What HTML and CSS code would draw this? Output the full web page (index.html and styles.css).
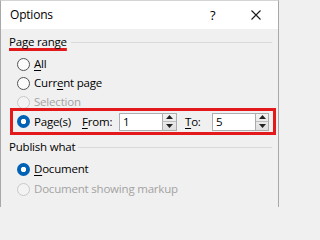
FILE: index.html
```html
<!DOCTYPE html>
<html>
<head>
<meta charset="utf-8">
<link rel="stylesheet" href="styles.css">
</head>
<body>
<div class="window">
  <div class="titlebar">
    <span class="title">Options</span>
    <span class="help">?</span>
    <span class="close"><svg width="10" height="10" viewBox="0 0 10 10"><path d="M0.5 0.5 L9.5 9.5 M9.5 0.5 L0.5 9.5" stroke="#1a1a1a" stroke-width="1.1" fill="none"/></svg></span>
  </div>
  <div class="content">
    <div class="group-head"><span class="group-label marked">Page range</span><span class="rule"></span></div>
    <div class="opt first"><span class="radio"></span><span class="lbl"><u>A</u>ll</span></div>
    <div class="opt"><span class="radio"></span><span class="lbl">Curr<u>e</u>nt page</span></div>
    <div class="opt disabled"><span class="radio"></span><span class="lbl">Selection</span></div>
    <div class="opt pages">
      <span class="radio checked"></span><span class="lbl pages-label">Pa<u>g</u>e(s)</span>
      <span class="lbl from"><u>F</u>rom:</span>
      <span class="spin"><span class="spin-input">1</span><span class="spin-btns"><span class="spin-up"><svg width="7" height="4" viewBox="0 0 7 4"><path d="M0 4 L3.5 0 L7 4 Z" fill="#222"/></svg></span><span class="spin-down"><svg width="7" height="4" viewBox="0 0 7 4"><path d="M0 0 L3.5 4 L7 0 Z" fill="#222"/></svg></span></span></span>
      <span class="lbl to"><u>T</u>o:</span>
      <span class="spin spin-b"><span class="spin-input">5</span><span class="spin-btns"><span class="spin-up"><svg width="7" height="4" viewBox="0 0 7 4"><path d="M0 4 L3.5 0 L7 4 Z" fill="#222"/></svg></span><span class="spin-down"><svg width="7" height="4" viewBox="0 0 7 4"><path d="M0 0 L3.5 4 L7 0 Z" fill="#222"/></svg></span></span></span>
    </div>
    <div class="group-head publish"><span class="group-label">Publish what</span><span class="rule"></span></div>
    <div class="opt first"><span class="radio checked"></span><span class="lbl"><u>D</u>ocument</span></div>
    <div class="opt disabled markup"><span class="radio"></span><span class="lbl">Document showing markup</span></div>
  </div>
</div>
</body>
</html>
```
FILE: styles.css
```css
html, body {
  margin: 0;
  padding: 0;
  background: #f0f0f0;
}
body {
  font-family: "Open Sans", "Noto Sans", sans-serif;
  font-size: 11.5px;
  letter-spacing: -0.2px;
  line-height: 16px;
  color: #000;
}
.window {
  width: 279px;
  height: 207px;
  box-sizing: border-box;
  border-left: 1px solid #a8a8a8;
  border-right: 1px solid #a8a8a8;
  border-top: 1px solid #d4d4d4;
  background: #f0f0f0;
  overflow: hidden;
}
.titlebar {
  height: 28px;
  background: #fff;
  display: flex;
  align-items: center;
  padding-bottom: 1px;
  box-sizing: border-box;
}
.title {
  margin-left: 9px;
  font-size: 12px;
}
.help {
  margin-left: auto;
  width: 10px;
  font-size: 13px;
  margin-right: 31px;
}
.close {
  display: flex;
  margin-right: 17px;
  margin-top: 1px;
}
.content {
  padding: 5px 6px 0 8px;
}
.group-head {
  display: flex;
  height: 16px;
  align-items: flex-start;
}
.group-label {
  white-space: nowrap;
}
.marked {
  text-decoration: underline;
  text-decoration-color: #e3191c;
  text-decoration-thickness: 3px;
  text-underline-offset: 2px;
  text-decoration-skip-ink: none;
  padding-right: 1px;
}
.rule {
  flex: 1;
  border-top: 1px solid #dadada;
  margin-top: 8px;
  margin-left: 3px;
}
.opt {
  display: flex;
  align-items: center;
  height: 14px;
  margin-top: 5px;
  padding-left: 8px;
}
.opt.first {
  margin-top: 7px;
}
.lbl {
  white-space: nowrap;
}
u {
  text-decoration-thickness: 1px;
  text-underline-offset: 2px;
}
.radio {
  width: 13px;
  height: 13px;
  box-sizing: border-box;
  border-radius: 50%;
  border: 1px solid #555;
  background: #fbfbfb;
  margin-right: 4px;
  flex: none;
}
.radio.checked {
  border: none;
  background: radial-gradient(circle, #fff 0 2.4px, #0061b5 3px);
}
.disabled .lbl {
  color: #a3a3a3;
}
.disabled .radio {
  border-color: #c9c9c9;
  background: #f3f3f3;
}
.opt.pages {
  margin-top: 2px;
  height: 21px;
  margin-left: 4px;
  margin-right: -1px;
  padding-left: 4px;
  outline: 3px solid #e3191c;
}
.pages-label {
  width: 48px;
}
.from {
  width: 37px;
}
.to {
  margin-left: 8px;
  width: 27px;
}
.spin {
  display: flex;
  height: 18px;
}
.spin-input {
  width: 43px;
  box-sizing: border-box;
  background: #fff;
  border: 1px solid #abadb3;
  border-right: none;
  padding-left: 3px;
  line-height: 16px;
}
.spin-btns {
  width: 15px;
  box-sizing: border-box;
  border: 1px solid #acacac;
  background: linear-gradient(#f4f4f4, #dedede);
  display: flex;
  flex-direction: column;
}
.spin-b .spin-btns {
  width: 14px;
}
.spin-up, .spin-down {
  flex: 1;
  display: flex;
  align-items: center;
  justify-content: center;
}
.spin-up {
  border-bottom: 1px solid #bdbdbd;
}
.group-head.publish {
  margin-top: 7px;
}
.opt.markup {
  margin-top: 6px;
}
```
